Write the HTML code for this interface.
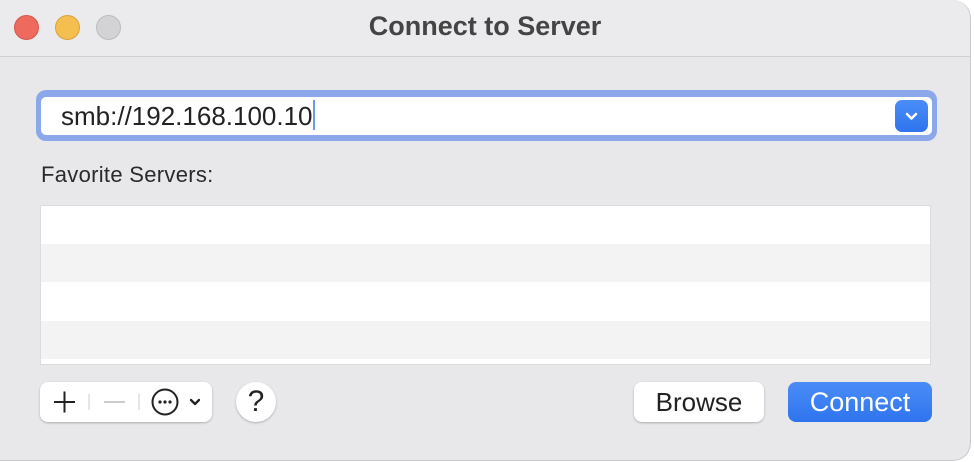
<!DOCTYPE html>
<html><head><style>
*{margin:0;padding:0;box-sizing:border-box}
body{width:974px;height:462px;background:#fff;font-family:"Liberation Sans",sans-serif;overflow:hidden;position:relative}
.win{position:absolute;left:0;top:0;width:971px;height:461px;background:#e8e7ea;border-radius:0 18px 18px 0;border-right:1px solid #c9c9cb;border-bottom:1px solid #c9c9cb}
.tb{position:absolute;left:0;top:0;width:100%;height:57px;background:#ebeaed;border-bottom:1px solid #cfcfd1;border-radius:0 18px 0 0}
.dot{position:absolute;top:15px;width:25px;height:25px;border-radius:50%}
.title{position:absolute;left:0;width:970px;top:11px;text-align:center;font-size:27px;font-weight:bold;color:#444}
.ring{position:absolute;left:36px;top:90px;width:901px;height:51px;border-radius:10px;background:#8aa8ea}
.field{position:absolute;left:41px;top:97px;width:891px;height:38px;background:#fff;border-radius:5px}
.field span{position:absolute;left:20px;top:4px;font-size:26px;color:#222;letter-spacing:0}
.caret{position:absolute;left:272px;top:3px;width:2px;height:30px;background:#6f98ea}
.chev{position:absolute;left:895px;top:100px;width:33px;height:32px;border-radius:7px;background:linear-gradient(#4a8df7,#2f74ee)}
.lab{position:absolute;left:41px;top:162px;font-size:22px;color:#2a2a2a;letter-spacing:0.3px}
.list{position:absolute;left:40px;top:205px;width:891px;height:160px;background:#fff;border:1px solid #dcdcdc}
.r{position:absolute;left:0;width:100%;height:38px;background:#f3f3f3}
.btn{position:absolute;top:382px;height:40px;border-radius:8px;background:#fff;box-shadow:0 1px 2px rgba(0,0,0,.25);font-size:26px;text-align:center;line-height:40px;color:#222}
</style></head><body>
<div class="win">
<div class="tb">
<div class="dot" style="left:14px;background:#ee6a5e;border:1px solid #d5574c"></div>
<div class="dot" style="left:55px;background:#f5bf4f;border:1px solid #d9a23d"></div>
<div class="dot" style="left:96px;background:#d3d2d5;border:1px solid #bdbcbf"></div>
<div class="title">Connect to Server</div>
</div>
<div class="ring"></div>
<div class="field"><span>smb://192.168.100.10</span><div class="caret"></div></div>
<div class="chev"><svg width="33" height="32"><path d="M12 14 L16.5 18.5 L21 14" stroke="#fff" stroke-width="2.5" fill="none" stroke-linecap="round" stroke-linejoin="round"/></svg></div>
<div class="lab">Favorite Servers:</div>
<div class="list"><div class="r" style="top:38px"></div><div class="r" style="top:115px"></div></div>
<div class="btn" style="left:40px;width:172px">
<svg width="172" height="40" style="position:absolute;left:0;top:0">
<path d="M14 20h21M24.5 9.5v21" stroke="#222" stroke-width="2"/>
<path d="M49 12v16M99 12v16" stroke="#ddd" stroke-width="1.5"/>
<path d="M64 20h21" stroke="#ccc" stroke-width="2"/>
<circle cx="125" cy="20" r="12.5" stroke="#222" stroke-width="2" fill="none"/>
<circle cx="120" cy="20" r="1.6" fill="#222"/><circle cx="125" cy="20" r="1.6" fill="#222"/><circle cx="130" cy="20" r="1.6" fill="#222"/>
<path d="M151 18l4 4 4-4" stroke="#222" stroke-width="2.3" fill="none" stroke-linecap="round" stroke-linejoin="round"/>
</svg></div>
<div class="btn" style="left:236px;width:40px;border-radius:50%;font-size:30px">?</div>
<div class="btn" style="left:634px;width:130px">Browse</div>
<div class="btn" style="left:788px;width:144px;background:linear-gradient(#4a8df7,#2f74ee);color:#fff;box-shadow:none;font-size:27px">Connect</div>
</div>
</body></html>
